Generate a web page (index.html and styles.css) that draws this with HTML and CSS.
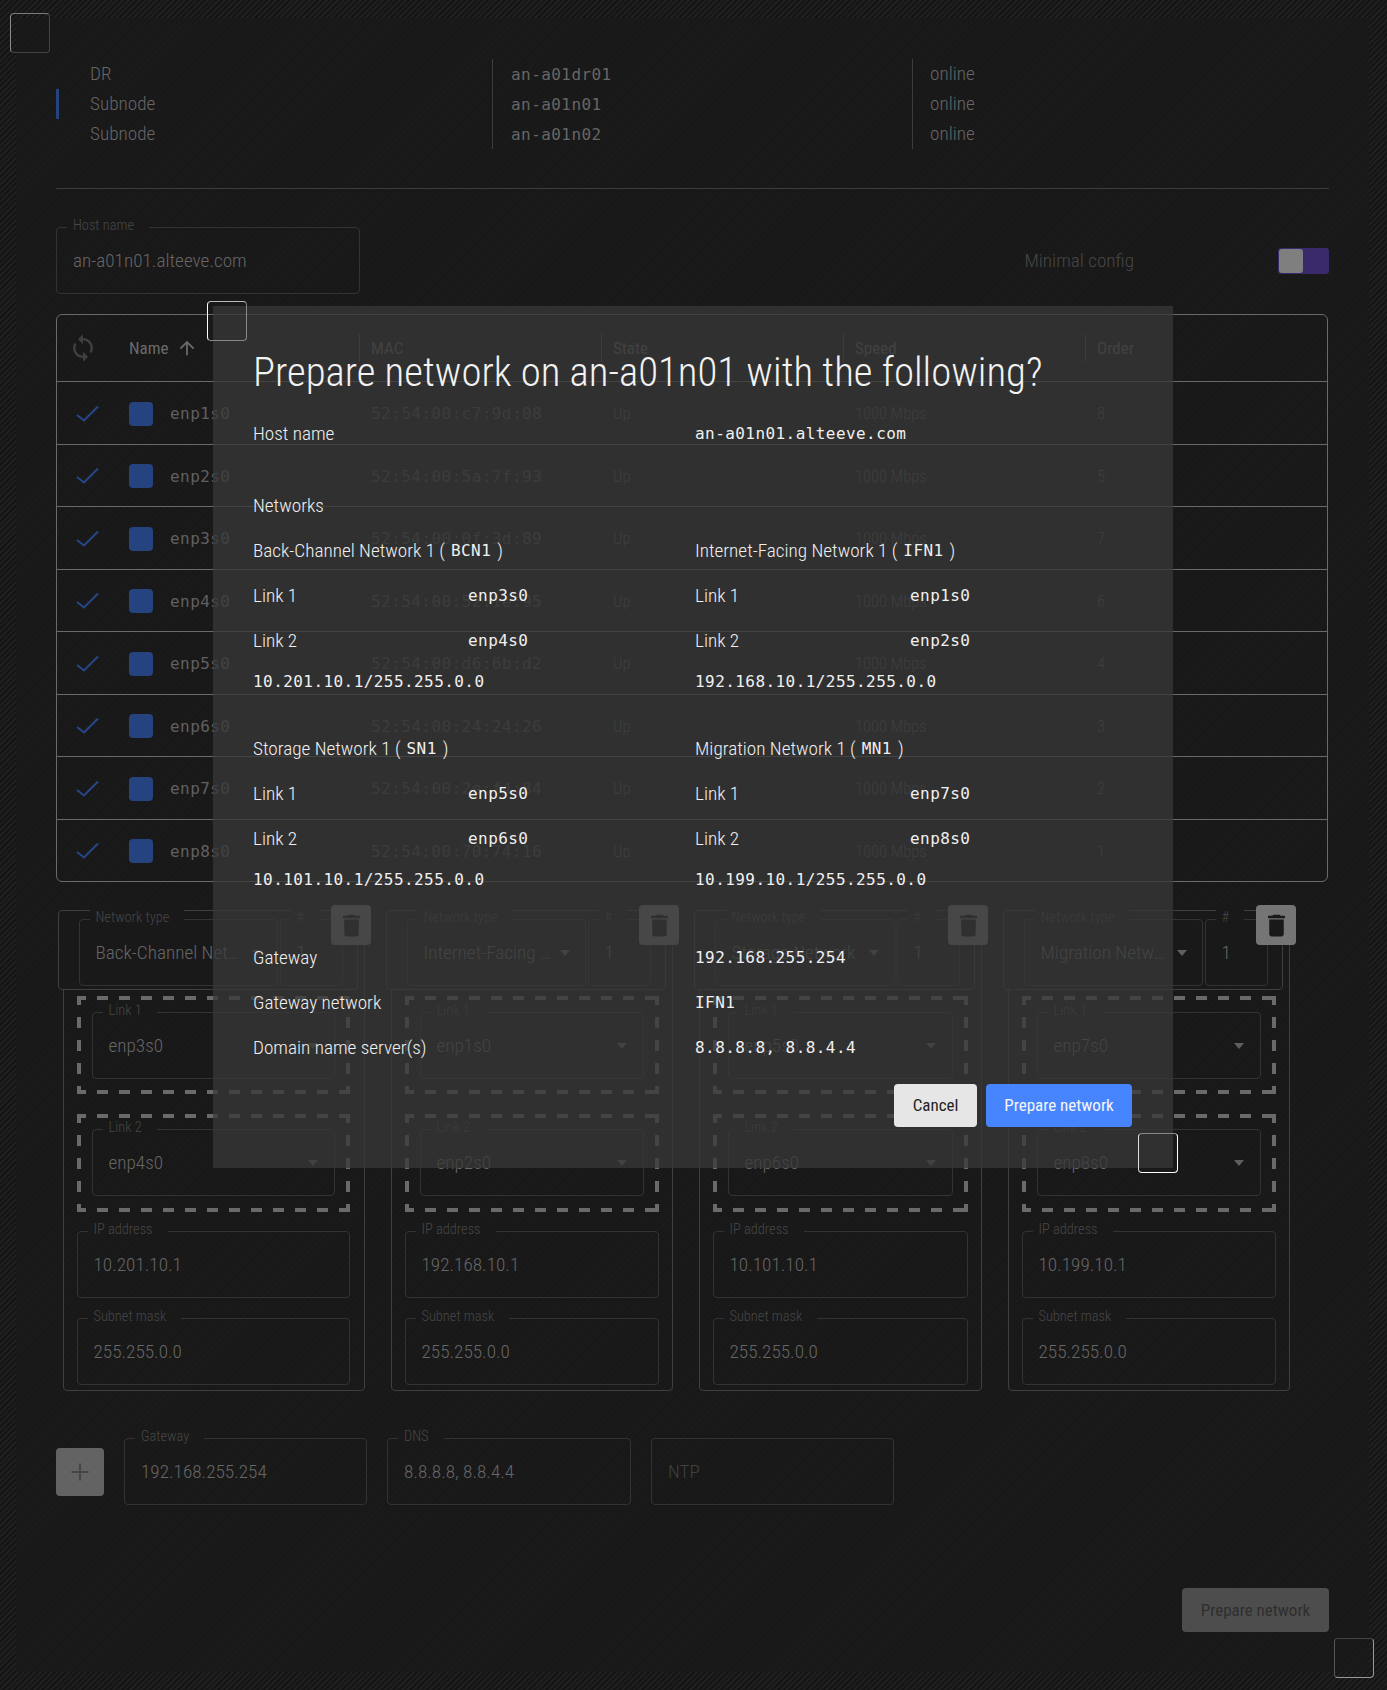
FILE: index.html
```html
<!DOCTYPE html>
<html lang="en">
<head>
<meta charset="utf-8">
<title>Prepare network</title>
<link rel="stylesheet" href="styles.css">
</head>
<body>
<div class="page">
  <span class="guard guard-a"></span>
  <main class="panel">
    <section class="hosts">
      <div class="host-row"><span class="host-type">DR</span><span class="host-name mono">an-a01dr01</span><span class="host-state">online</span></div>
      <div class="host-row is-active"><span class="host-type">Subnode</span><span class="host-name mono">an-a01n01</span><span class="host-state">online</span></div>
      <div class="host-row"><span class="host-type">Subnode</span><span class="host-name mono">an-a01n02</span><span class="host-state">online</span></div>
    </section>
    <hr class="rule">
    <section class="host-bar">
      <div class="field field-host"><label>Host name</label><span>an-a01n01.alteeve.com</span></div>
      <span class="minimal">Minimal config</span>
      <span class="switch"><i></i></span>
    </section>
    <section class="table">
      <div class="tr th">
        <div class="cell-sync"><svg class="ic-sync" viewBox="0 0 24 24"><path d="M12 4V1L8 5l4 4V6c3.31 0 6 2.69 6 6 0 1.01-.25 1.97-.7 2.8l1.46 1.46C19.54 15.03 20 13.57 20 12c0-4.42-3.58-8-8-8zm0 14c-3.31 0-6-2.69-6-6 0-1.01.25-1.97.7-2.8L5.24 7.74C4.46 8.97 4 10.43 4 12c0 4.42 3.58 8 8 8v3l4-4-4-4v3z"/></svg></div>
        <div class="cell-name">Name<svg class="ic-arrow" viewBox="0 0 24 24"><path d="M4 12l1.41 1.41L11 7.83V20h2V7.83l5.58 5.59L20 12l-8-8-8 8z"/></svg></div>
        <div class="col col-h">MAC</div><div class="col col-h">State</div><div class="col col-h">Speed</div><div class="col col-h">Order</div>
      </div>
      <div class="tr"><div class="cell-sync"><svg class="ic-check" viewBox="0 0 24 18"><polyline points="1,10 8,15.5 22,1.5"/></svg></div><div class="cell-name"><b class="chip"></b><span class="mono">enp1s0</span></div><div class="col mono">52:54:00:c7:9d:08</div><div class="col">Up</div><div class="col">1000 Mbps</div><div class="col">8</div></div>
      <div class="tr"><div class="cell-sync"><svg class="ic-check" viewBox="0 0 24 18"><polyline points="1,10 8,15.5 22,1.5"/></svg></div><div class="cell-name"><b class="chip"></b><span class="mono">enp2s0</span></div><div class="col mono">52:54:00:5a:7f:93</div><div class="col">Up</div><div class="col">1000 Mbps</div><div class="col">5</div></div>
      <div class="tr"><div class="cell-sync"><svg class="ic-check" viewBox="0 0 24 18"><polyline points="1,10 8,15.5 22,1.5"/></svg></div><div class="cell-name"><b class="chip"></b><span class="mono">enp3s0</span></div><div class="col mono">52:54:00:0f:3d:89</div><div class="col">Up</div><div class="col">1000 Mbps</div><div class="col">7</div></div>
      <div class="tr"><div class="cell-sync"><svg class="ic-check" viewBox="0 0 24 18"><polyline points="1,10 8,15.5 22,1.5"/></svg></div><div class="cell-name"><b class="chip"></b><span class="mono">enp4s0</span></div><div class="col mono">52:54:00:52:1e:95</div><div class="col">Up</div><div class="col">1000 Mbps</div><div class="col">6</div></div>
      <div class="tr"><div class="cell-sync"><svg class="ic-check" viewBox="0 0 24 18"><polyline points="1,10 8,15.5 22,1.5"/></svg></div><div class="cell-name"><b class="chip"></b><span class="mono">enp5s0</span></div><div class="col mono">52:54:00:d6:6b:d2</div><div class="col">Up</div><div class="col">1000 Mbps</div><div class="col">4</div></div>
      <div class="tr"><div class="cell-sync"><svg class="ic-check" viewBox="0 0 24 18"><polyline points="1,10 8,15.5 22,1.5"/></svg></div><div class="cell-name"><b class="chip"></b><span class="mono">enp6s0</span></div><div class="col mono">52:54:00:24:24:26</div><div class="col">Up</div><div class="col">1000 Mbps</div><div class="col">3</div></div>
      <div class="tr"><div class="cell-sync"><svg class="ic-check" viewBox="0 0 24 18"><polyline points="1,10 8,15.5 22,1.5"/></svg></div><div class="cell-name"><b class="chip"></b><span class="mono">enp7s0</span></div><div class="col mono">52:54:00:2e:f4:84</div><div class="col">Up</div><div class="col">1000 Mbps</div><div class="col">2</div></div>
      <div class="tr"><div class="cell-sync"><svg class="ic-check" viewBox="0 0 24 18"><polyline points="1,10 8,15.5 22,1.5"/></svg></div><div class="cell-name"><b class="chip"></b><span class="mono">enp8s0</span></div><div class="col mono">52:54:00:70:74:16</div><div class="col">Up</div><div class="col">1000 Mbps</div><div class="col">1</div></div>
    </section>
    <section class="nets">
      <article class="net net-wide">
        <button class="trash"><svg viewBox="0 0 24 24"><path d="M6 19c0 1.1.9 2 2 2h8c1.1 0 2-.9 2-2V7H6v12zM19 4h-3.5l-1-1h-5l-1 1H5v2h14V4z"/></svg></button>
        <div class="net-head">
          <div class="field field-type"><label>Network type</label><span class="val">Back-Channel Network</span><i class="caret"></i></div>
          <div class="field field-num"><label>#</label><span>1</span></div>
        </div>
        <div class="dash"><div class="field"><label>Link 1</label><span class="val">enp3s0</span><i class="caret"></i></div></div>
        <div class="dash dash-2"><div class="field"><label>Link 2</label><span class="val">enp4s0</span><i class="caret"></i></div></div>
        <div class="field field-ip"><label>IP address</label><span>10.201.10.1</span></div>
        <div class="field field-mask"><label>Subnet mask</label><span>255.255.0.0</span></div>
      </article>
      <article class="net">
        <button class="trash"><svg viewBox="0 0 24 24"><path d="M6 19c0 1.1.9 2 2 2h8c1.1 0 2-.9 2-2V7H6v12zM19 4h-3.5l-1-1h-5l-1 1H5v2h14V4z"/></svg></button>
        <div class="net-head">
          <div class="field field-type"><label>Network type</label><span class="val">Internet-Facing Network</span><i class="caret"></i></div>
          <div class="field field-num"><label>#</label><span>1</span></div>
        </div>
        <div class="dash"><div class="field"><label>Link 1</label><span class="val">enp1s0</span><i class="caret"></i></div></div>
        <div class="dash dash-2"><div class="field"><label>Link 2</label><span class="val">enp2s0</span><i class="caret"></i></div></div>
        <div class="field field-ip"><label>IP address</label><span>192.168.10.1</span></div>
        <div class="field field-mask"><label>Subnet mask</label><span>255.255.0.0</span></div>
      </article>
      <article class="net net-mid">
        <button class="trash"><svg viewBox="0 0 24 24"><path d="M6 19c0 1.1.9 2 2 2h8c1.1 0 2-.9 2-2V7H6v12zM19 4h-3.5l-1-1h-5l-1 1H5v2h14V4z"/></svg></button>
        <div class="net-head">
          <div class="field field-type"><label>Network type</label><span class="val">Storage Network</span><i class="caret"></i></div>
          <div class="field field-num"><label>#</label><span>1</span></div>
        </div>
        <div class="dash"><div class="field"><label>Link 1</label><span class="val">enp5s0</span><i class="caret"></i></div></div>
        <div class="dash dash-2"><div class="field"><label>Link 2</label><span class="val">enp6s0</span><i class="caret"></i></div></div>
        <div class="field field-ip"><label>IP address</label><span>10.101.10.1</span></div>
        <div class="field field-mask"><label>Subnet mask</label><span>255.255.0.0</span></div>
      </article>
      <article class="net">
        <button class="trash"><svg viewBox="0 0 24 24"><path d="M6 19c0 1.1.9 2 2 2h8c1.1 0 2-.9 2-2V7H6v12zM19 4h-3.5l-1-1h-5l-1 1H5v2h14V4z"/></svg></button>
        <div class="net-head">
          <div class="field field-type"><label>Network type</label><span class="val">Migration Network</span><i class="caret"></i></div>
          <div class="field field-num"><label>#</label><span>1</span></div>
        </div>
        <div class="dash"><div class="field"><label>Link 1</label><span class="val">enp7s0</span><i class="caret"></i></div></div>
        <div class="dash dash-2"><div class="field"><label>Link 2</label><span class="val">enp8s0</span><i class="caret"></i></div></div>
        <div class="field field-ip"><label>IP address</label><span>10.199.10.1</span></div>
        <div class="field field-mask"><label>Subnet mask</label><span>255.255.0.0</span></div>
      </article>
    </section>
    <section class="globals">
      <button class="add"><svg viewBox="0 0 24 24"><path d="M3.5 12h17M12 3.5v17"/></svg></button>
      <div class="field field-global"><label>Gateway</label><span>192.168.255.254</span></div>
      <div class="field field-global field-dns"><label>DNS</label><span>8.8.8.8, 8.8.4.4</span></div>
      <div class="field field-global"><span class="placeholder">NTP</span></div>
    </section>
    <div class="actions"><button class="btn-off">Prepare network</button></div>
  </main>
  <span class="guard guard-d"></span>
</div>

<div class="dialog" role="dialog">
  <h1>Prepare network on an-a01n01 with the following?</h1>
  <div class="d-host"><span>Host name</span><span class="mono">an-a01n01.alteeve.com</span></div>
  <div class="d-head">Networks</div>
  <div class="d-nets">
    <div>
      <div class="d-row">Back-Channel Network 1 (<span class="mono d-code">BCN1</span>)</div>
      <div class="d-row d-link"><span>Link 1</span><span class="mono">enp3s0</span></div>
      <div class="d-row d-link"><span>Link 2</span><span class="mono">enp4s0</span></div>
      <div class="d-row d-ip mono">10.201.10.1/255.255.0.0</div>
    </div>
    <div>
      <div class="d-row">Internet-Facing Network 1 (<span class="mono d-code">IFN1</span>)</div>
      <div class="d-row d-link"><span>Link 1</span><span class="mono">enp1s0</span></div>
      <div class="d-row d-link"><span>Link 2</span><span class="mono">enp2s0</span></div>
      <div class="d-row d-ip mono">192.168.10.1/255.255.0.0</div>
    </div>
    <div>
      <div class="d-row">Storage Network 1 (<span class="mono d-code">SN1</span>)</div>
      <div class="d-row d-link"><span>Link 1</span><span class="mono">enp5s0</span></div>
      <div class="d-row d-link"><span>Link 2</span><span class="mono">enp6s0</span></div>
      <div class="d-row d-ip mono">10.101.10.1/255.255.0.0</div>
    </div>
    <div>
      <div class="d-row">Migration Network 1 (<span class="mono d-code">MN1</span>)</div>
      <div class="d-row d-link"><span>Link 1</span><span class="mono">enp7s0</span></div>
      <div class="d-row d-link"><span>Link 2</span><span class="mono">enp8s0</span></div>
      <div class="d-row d-ip mono">10.199.10.1/255.255.0.0</div>
    </div>
  </div>
  <div class="d-summary">
    <div class="d-kv"><span>Gateway</span><span class="mono">192.168.255.254</span></div>
    <div class="d-kv"><span>Gateway network</span><span class="mono">IFN1</span></div>
    <div class="d-kv"><span>Domain name server(s)</span><span class="mono">8.8.8.8, 8.8.4.4</span></div>
  </div>
  <div class="d-actions"><button class="btn btn-cancel">Cancel</button><button class="btn btn-go">Prepare network</button></div>
  <span class="guard guard-b"></span>
  <span class="guard guard-c"></span>
</div>
</body>
</html>
```
FILE: styles.css
```css
* { box-sizing: border-box; }
html, body { margin: 0; padding: 0; }
body {
  position: relative;
  width: 1387px;
  height: 1690px;
  overflow: hidden;
  font-family: "Roboto Condensed", Roboto, sans-serif;
  font-stretch: condensed;
  font-weight: 300;
  font-size: 19.2px;
  color: #666;
  background: #191919;
}
button { font: inherit; border: 0; padding: 0; }
.mono { font-family: "DejaVu Sans Mono", monospace; font-stretch: normal; font-weight: 400; font-size: 16px; letter-spacing: .43px; }

.page {
  height: 1690px;
  padding: 18px 18px 18px 16px;
  background: repeating-linear-gradient(135deg, #151515 0 2px, #1f1f1f 2px 4px);
}
.panel {
  height: 1654px;
  padding: 41px 40px 0;
  background: repeating-linear-gradient(135deg, #181818 0 2px, #1a1a1a 2px 4px);
}

.guard { position: absolute; width: 40px; height: 40px; border: 1px solid #666; border-radius: 4px; }
.guard-a { left: 10px; top: 13px; border-color: #7a7a7a #444 #444 #8a8a8a; }
.guard-d { left: 1334px; top: 1638px; border-color: #444 #999 #999 #555; }
.guard-b { left: -6px; top: -5px; border-color: #bbb #888 #888 #fff; }
.guard-c { left: 925px; top: 827px; border-color: #888 #fff #fff #ddd; }

/* hosts */
.host-row { display: grid; grid-template-columns: 436px 420px 1fr; height: 30px; position: relative; align-items: stretch; }
.host-row span { display: flex; align-items: center; }
.host-type { padding-left: 34px; padding-bottom: 1px; }
.host-name { padding-left: 18px; border-left: 1px solid #3c3c3c; color: #666; }
.host-state { padding-left: 17px; padding-bottom: 1px; border-left: 1px solid #3c3c3c; }
.is-active::before { content: ""; position: absolute; left: 0; top: 0; bottom: 0; width: 3px; background: #24437f; }
.rule { margin: 39px 0 0; height: 1px; border: 0; background: #3c3c3c; }

/* fields */
.field { position: relative; display: flex; align-items: center; height: 67px; padding: 0 16px; border: 1px solid #333; border-radius: 4px; }
.field label { position: absolute; left: 10px; top: -12px; padding: 0 15px 0 6px; font-size: 14.4px; line-height: 20px; color: #474747; background: #191919; white-space: nowrap; }
.val { flex: 1; min-width: 0; overflow: hidden; white-space: nowrap; text-overflow: ellipsis; }
.caret { flex: none; width: 0; height: 0; margin: 0 0 0 6px; border-left: 5.5px solid transparent; border-right: 5.5px solid transparent; border-top: 6px solid #5f5f5f; }
.placeholder { color: #414141; }

.host-bar { display: flex; align-items: center; margin-top: 38px; }
.field-host { width: 304px; }
.minimal { margin-left: auto; color: #474747; }
.switch { margin-left: 144px; display: block; width: 51px; height: 26px; padding: 1px; border-radius: 3px; background: #3a2a6b; }
.switch i { display: block; width: 24px; height: 24px; border-radius: 3px; background: #7f7f7f; }

/* table */
.table { display: flex; flex-direction: column; width: 1272px; height: 568px; margin: 20px 0 0; border: 1px solid #6a6a6a; border-radius: 6px; }
.tr { flex: 1; display: grid; grid-template-columns: 72px 230px 242px 242px 242px 1fr; align-items: center; padding-top: 2px; border-top: 1px solid #6a6a6a; }
.th { flex: none; height: 66px; padding-top: 0; border-top: 0; color: #6a6a6a; font-weight: 400; font-size: 17px; }
.cell-sync { display: flex; justify-content: center; }
.ic-sync { width: 30px; height: 30px; margin-left: -20px; fill: #3f3f3f; }
.ic-check { width: 24px; height: 18px; margin-left: -10px; fill: none; stroke: #27478a; stroke-width: 2; }
.cell-name { display: flex; align-items: center; }
.ic-arrow { width: 22px; height: 22px; margin-left: 8px; fill: #6a6a6a; }
.chip { flex: none; width: 24px; height: 24px; margin-right: 17px; border-radius: 4px; background: #24437f; }
.tr .mono { color: #606060; }
.col { position: relative; padding-left: 12px; white-space: nowrap; color: #505050; font-size: 16.5px; }
.tr .col.mono { color: #4a4a4a; font-size: 16px; }
.col-h { color: #606060; font-size: 17px; }
.col-h::before { content: ""; position: absolute; left: 0; top: 50%; height: 28px; margin-top: -14px; width: 1px; background: #4a4a4a; }

/* network cards */
.nets { display: flex; gap: 26px; margin: 34px 0 0 6.5px; }
.net { position: relative; width: 282px; height: 475px; padding: 0 13px; border: 1px solid #3f3f3f; border-radius: 4px; }
.net-wide { width: 302px; padding-right: 14px; }
.net-mid { width: 283px; }
.trash { position: absolute; right: -7.5px; top: -12px; z-index: 2; display: flex; align-items: center; justify-content: center; width: 40px; height: 40px; border-radius: 4px; background: #757575; }
.trash svg { width: 29px; height: 29px; fill: #191919; }
.net-head { position: relative; display: flex; gap: 2px; height: 80px; margin: -7px -7px 6px -19px; padding: 8px 14px 0 20px; border: 1px solid #3f3f3f; border-radius: 4px; background: #191919; }
.net-wide .net-head { margin-right: -8px; }
.field-type { flex: 1; min-width: 0; padding-right: 15px; }
.field-num { flex: none; width: 63px; }
.dash {
  height: 98px;
  padding: 16px 15px;
  background-image:
    linear-gradient(90deg, #6a6a6a 50%, transparent 50%),
    linear-gradient(90deg, #6a6a6a 50%, transparent 50%),
    linear-gradient(#6a6a6a 50%, transparent 50%),
    linear-gradient(#6a6a6a 50%, transparent 50%);
  background-size: 22px 4px, 22px 4px, 4px 23px, 4px 23px;
  background-repeat: repeat-x, repeat-x, repeat-y, repeat-y;
  background-position: -2px 0, -2px 100%, 0 -2px, 100% -2px;
}
.dash-2 { margin-top: 20px; padding-top: 15px; }
.field-ip { margin-top: 19px; }
.field-mask { margin-top: 20px; }

/* bottom */
.globals { display: flex; align-items: center; gap: 20px; margin-top: 47px; }
.add { display: flex; align-items: center; justify-content: center; flex: none; width: 48px; height: 48px; border-radius: 4px; background: #636363; }
.add svg { width: 24px; height: 24px; fill: none; stroke: #454545; stroke-width: 2; }
.field-global { width: 243px; }
.field-dns { width: 244px; }
.actions { display: flex; justify-content: flex-end; margin-top: 83px; }
.btn-off { width: 147px; height: 44px; border-radius: 4px; background: #4d4d4d; color: #2f2f2f; font-weight: 400; font-size: 17px; }

/* dialog */
.dialog {
  position: absolute;
  z-index: 3;
  left: 213px;
  top: 306px;
  width: 960px;
  height: 862px;
  padding: 42px 41px 0 40px;
  background: rgba(56, 56, 56, .75);
  color: #f0f0f0;
}
.dialog .mono { color: #f0f0f0; }
.dialog h1 { margin: 0 0 15px; font-size: 40.8px; line-height: 48px; font-weight: 300; color: #f2f2f2; white-space: nowrap; }
.d-host { display: grid; grid-template-columns: 442px 1fr; align-items: center; height: 45px; }
.d-head { display: flex; align-items: center; height: 45px; margin-top: 27px; }
.d-nets { display: grid; grid-template-columns: 442px 1fr; row-gap: 26px; }
.d-row { display: flex; align-items: center; height: 45px; }
.d-code { margin: 0 6px; }
.d-link { display: grid; grid-template-columns: 215px 1fr; }
.d-ip { height: 37px; }
.d-summary { margin-top: 37px; }
.d-kv { display: grid; grid-template-columns: 442px 1fr; align-items: center; height: 45px; }
.d-actions { display: flex; justify-content: flex-end; gap: 9px; margin-top: 14px; }
.btn { height: 43px; padding-bottom: 2px; border-radius: 4px; font-weight: 400; font-size: 17px; }
.btn-cancel { width: 83px; background: #e6e6e6; color: #1f1f1f; }
.btn-go { width: 146px; background: #4785ff; color: #f5f5f5; }
```
